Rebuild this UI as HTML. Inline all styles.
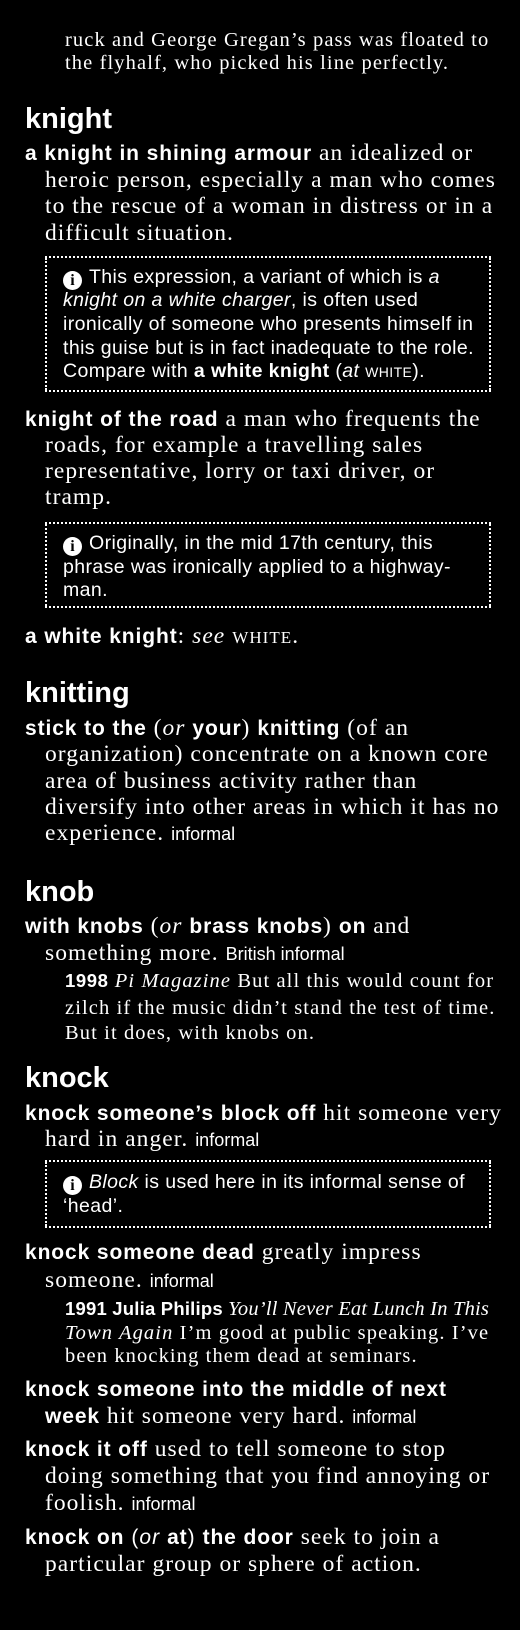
<!DOCTYPE html>
<html><head><meta charset="utf-8"><style>
html,body{margin:0;padding:0;background:#000;}
body{width:520px;height:1630px;position:relative;overflow:hidden;color:#fff;}
.l{position:absolute;white-space:nowrap;height:26px;line-height:26px;font-family:"Liberation Serif",serif;font-size:23.5px;letter-spacing:1.05px;}
.s{font-family:"Liberation Sans",sans-serif;}
b,.b{font-family:"Liberation Sans",sans-serif;font-weight:bold;font-size:21px;letter-spacing:0.9px;}
.inf{font-family:"Liberation Sans",sans-serif;font-size:18px;letter-spacing:0;}
.h{font-family:"Liberation Sans",sans-serif;font-weight:bold;font-size:29px;letter-spacing:0;}
.bx{position:absolute;left:45px;width:446px;border-top:2px dotted #fff;border-bottom:2px dotted #fff;}
.bx:before,.bx:after{content:"";position:absolute;top:0;bottom:0;border-left:2px dotted #fff;}
.bx:before{left:0}.bx:after{right:0}
.n{font-family:"Liberation Sans",sans-serif;font-size:19.5px;letter-spacing:0.4px;}
.n b{font-size:19.5px;letter-spacing:0.4px;}
.ic{display:inline-block;width:19px;height:19px;border-radius:50%;background:#fff;color:#000;font:bold 16px/19px "Liberation Serif",serif;text-align:center;vertical-align:-2px;margin-right:7px;letter-spacing:0;}
.sc{font-size:14px;}
.ex{font-size:20.5px;letter-spacing:1.1px;}
.ex b{font-size:18.5px;letter-spacing:0.6px;}
</style></head><body>
<div class="l ex" style="left:65px;top:27px">ruck and George Gregan’s pass was floated to</div>
<div class="l ex" style="left:65px;top:50px">the flyhalf, who picked his line perfectly.</div>

<div class="l h" style="left:25px;top:106px">knight</div>
<div class="l" style="left:25px;top:140px"><b>a knight in shining armour</b> an idealized or</div>
<div class="l" style="left:45px;top:167px">heroic person, especially a man who comes</div>
<div class="l" style="left:45px;top:193px">to the rescue of a woman in distress or in a</div>
<div class="l" style="left:45px;top:220px">difficult situation.</div>
<div class="bx" style="top:256px;height:132px"></div>
<div class="l n" style="left:63px;top:264px"><span class="ic">i</span>This expression, a variant of which is <i>a</i></div>
<div class="l n" style="left:63px;top:287px"><i>knight on a white charger</i>, is often used</div>
<div class="l n" style="left:63px;top:311px">ironically of someone who presents himself in</div>
<div class="l n" style="left:63px;top:335px">this guise but is in fact inadequate to the role.</div>
<div class="l n" style="left:63px;top:358px">Compare with <b>a white knight</b> (<i>at</i> <span class="sc">WHITE</span>).</div>

<div class="l" style="left:25px;top:406px"><b>knight of the road</b> a man who frequents the</div>
<div class="l" style="left:45px;top:432px">roads, for example a travelling sales</div>
<div class="l" style="left:45px;top:458px">representative, lorry or taxi driver, or</div>
<div class="l" style="left:45px;top:484px">tramp.</div>
<div class="bx" style="top:522px;height:82px"></div>
<div class="l n" style="left:63px;top:530px"><span class="ic">i</span>Originally, in the mid 17th century, this</div>
<div class="l n" style="left:63px;top:554px">phrase was ironically applied to a highway-</div>
<div class="l n" style="left:63px;top:577px">man.</div>
<div class="l" style="left:25px;top:623px"><b>a white knight</b>: <i>see</i> <span style="font-size:17px">WHITE</span>.</div>

<div class="l h" style="left:25px;top:680px">knitting</div>
<div class="l" style="left:25px;top:715px"><b>stick to the</b> (<i>or</i> <b>your</b>) <b>knitting</b> (of an</div>
<div class="l" style="left:45px;top:741px">organization) concentrate on a known core</div>
<div class="l" style="left:45px;top:768px">area of business activity rather than</div>
<div class="l" style="left:45px;top:794px">diversify into other areas in which it has no</div>
<div class="l" style="left:45px;top:820px">experience. <span class="inf">informal</span></div>

<div class="l h" style="left:25px;top:879px">knob</div>
<div class="l" style="left:25px;top:913px"><b>with knobs</b> (<i>or</i> <b>brass knobs</b>) <b>on</b> and</div>
<div class="l" style="left:45px;top:940px">something more. <span class="inf">British informal</span></div>
<div class="l ex" style="left:65px;top:968px"><b>1998</b> <i>Pi Magazine</i> But all this would count for</div>
<div class="l ex" style="left:65px;top:995px">zilch if the music didn’t stand the test of time.</div>
<div class="l ex" style="left:65px;top:1020px">But it does, with knobs on.</div>

<div class="l h" style="left:25px;top:1065px">knock</div>
<div class="l" style="left:25px;top:1100px"><b>knock someone’s block off</b> hit someone very</div>
<div class="l" style="left:45px;top:1126px">hard in anger. <span class="inf">informal</span></div>
<div class="bx" style="top:1160px;height:64px"></div>
<div class="l n" style="left:63px;top:1169px"><span class="ic">i</span><i>Block</i> is used here in its informal sense of</div>
<div class="l n" style="left:63px;top:1193px">‘head’.</div>

<div class="l" style="left:25px;top:1239px"><b>knock someone dead</b> greatly impress</div>
<div class="l" style="left:45px;top:1267px">someone. <span class="inf">informal</span></div>
<div class="l ex" style="left:65px;top:1296px;letter-spacing:0.2px"><b style="letter-spacing:0.2px">1991 Julia Philips</b> <i>You’ll Never Eat Lunch In This</i></div>
<div class="l ex" style="left:65px;top:1320px"><i>Town Again</i> I’m good at public speaking. I’ve</div>
<div class="l ex" style="left:65px;top:1343px">been knocking them dead at seminars.</div>
<div class="l" style="left:25px;top:1376px"><b>knock someone into the middle of next</b></div>
<div class="l" style="left:45px;top:1403px"><b>week</b> hit someone very hard. <span class="inf">informal</span></div>
<div class="l" style="left:25px;top:1436px"><b>knock it off</b> used to tell someone to stop</div>
<div class="l" style="left:45px;top:1463px">doing something that you find annoying or</div>
<div class="l" style="left:45px;top:1490px">foolish. <span class="inf">informal</span></div>
<div class="l" style="left:25px;top:1524px"><b>knock on</b> <span class="s" style="font-size:21px">(</span><i class="s" style="font-size:21px">or</i> <b>at</b><span class="s" style="font-size:21px">)</span> <b>the door</b> seek to join a</div>
<div class="l" style="left:45px;top:1551px">particular group or sphere of action.</div>
</body></html>
